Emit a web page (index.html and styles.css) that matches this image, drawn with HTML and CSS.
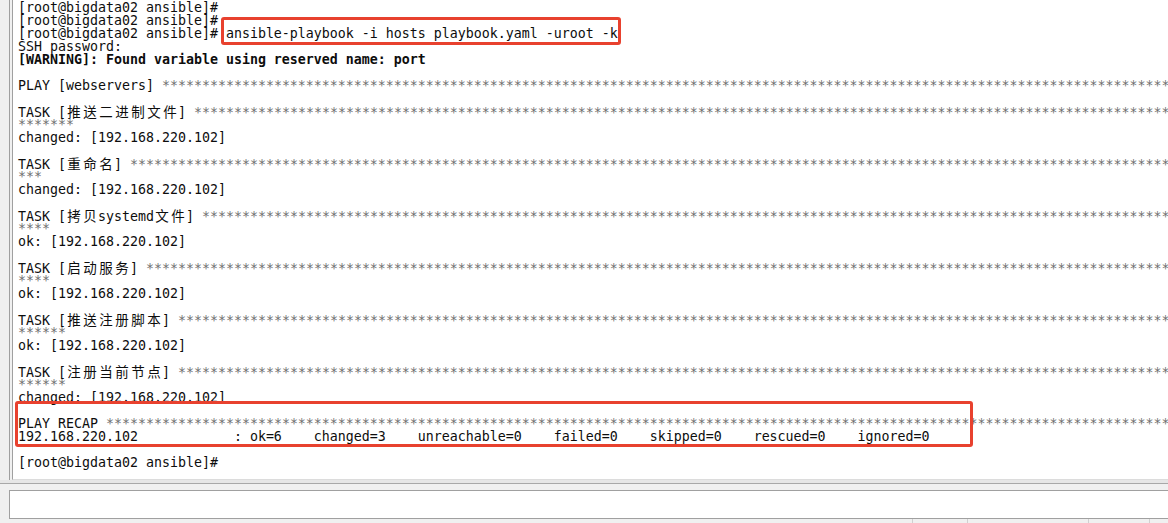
FILE: index.html
```html
<!DOCTYPE html>
<html lang="zh">
<head>
<meta charset="utf-8">
<title>ansible terminal</title>
<link rel="stylesheet" href="styles.css">
</head>
<body>
<div class="app">
  <div class="term-frame">
    <div class="screen">
      <div class="line">[root@bigdata02 ansible]#</div>
      <div class="line">[root@bigdata02 ansible]#</div>
      <div class="line">[root@bigdata02 ansible]# ansible-playbook -i hosts playbook.yaml -uroot -k</div>
      <div class="line">SSH password:</div>
      <div class="line bold">[WARNING]: Found variable using reserved name: port</div>
      <div class="line"></div>
      <div class="line">PLAY [webservers] <span class="stars">******************************************************************************************************************************************************</span></div>
      <div class="line"></div>
      <div class="line">TASK [<span class="cjk">推送二进制文件</span>] <span class="stars">******************************************************************************************************************************************************</span></div>
      <div class="line"><span class="stars">*******</span></div>
      <div class="line">changed: [192.168.220.102]</div>
      <div class="line"></div>
      <div class="line">TASK [<span class="cjk">重命名</span>] <span class="stars">******************************************************************************************************************************************************</span></div>
      <div class="line"><span class="stars">***</span></div>
      <div class="line">changed: [192.168.220.102]</div>
      <div class="line"></div>
      <div class="line">TASK [<span class="cjk">拷贝</span>systemd<span class="cjk">文件</span>] <span class="stars">******************************************************************************************************************************************************</span></div>
      <div class="line"><span class="stars">****</span></div>
      <div class="line">ok: [192.168.220.102]</div>
      <div class="line"></div>
      <div class="line">TASK [<span class="cjk">启动服务</span>] <span class="stars">******************************************************************************************************************************************************</span></div>
      <div class="line"><span class="stars">****</span></div>
      <div class="line">ok: [192.168.220.102]</div>
      <div class="line"></div>
      <div class="line">TASK [<span class="cjk">推送注册脚本</span>] <span class="stars">******************************************************************************************************************************************************</span></div>
      <div class="line"><span class="stars">******</span></div>
      <div class="line">ok: [192.168.220.102]</div>
      <div class="line"></div>
      <div class="line">TASK [<span class="cjk">注册当前节点</span>] <span class="stars">******************************************************************************************************************************************************</span></div>
      <div class="line"><span class="stars">******</span></div>
      <div class="line">changed: [192.168.220.102]</div>
      <div class="line"></div>
      <div class="line">PLAY RECAP <span class="stars">******************************************************************************************************************************************************</span></div>
      <div class="line">192.168.220.102            : ok=6    changed=3    unreachable=0    failed=0    skipped=0    rescued=0    ignored=0</div>
      <div class="line"></div>
      <div class="line">[root@bigdata02 ansible]#</div>

      <div class="mark mark-cmd"></div>
      <div class="mark mark-recap"></div>
    </div>
  </div>
  <div class="gap-bar"></div>
  <div class="input-box"></div>
  <div class="status-bar">
    <span class="status-cell grow"></span>
    <span class="status-cell w54"></span>
    <span class="status-cell w120"></span>
    <span class="status-cell w60"></span>
    <span class="status-cell w19"></span>
  </div>
</div>
</body>
</html>
```

FILE: styles.css
```css
html, body {
  margin: 0;
  padding: 0;
}

body {
  width: 1168px;
  height: 523px;
  overflow: hidden;
  background: #f0f0f0;
}

.app {
  display: flex;
  flex-direction: column;
  width: 1168px;
  height: 523px;
}

.term-frame {
  margin-left: 9px;
  border-left: 1px solid #a0a0a0;
  padding-left: 2px;
  height: 480px;
  flex: none;
  background: #f0f0f0;
}

.screen {
  position: relative;
  height: 480px;
  border-left: 1px solid #a0a0a0;
  border-bottom: 1px solid #dcdcdc;
  box-sizing: border-box;
  background: #ffffff;
  padding: 1px 0 0 5px;
  overflow: hidden;
  font-family: "DejaVu Sans Mono", "Noto Sans CJK SC", monospace;
  font-size: 13.29px;
  color: #0d0d0d;
}

.line {
  height: 13px;
  line-height: 13px;
  white-space: pre;
}

.bold {
  font-weight: bold;
}

.cjk {
  font-family: "Noto Sans CJK SC", sans-serif;
  font-size: 13.5px;
  letter-spacing: 2.5px;
  padding-left: 1.25px;
  margin-right: -1.25px;
  line-height: 13px;
}

.stars {
  color: #6f6f6f;
}

.mark {
  position: absolute;
  border: 3px solid #e8412e;
  border-radius: 3px;
  box-sizing: border-box;
}

.mark-cmd {
  left: 208px;
  top: 17px;
  width: 400px;
  height: 28px;
}

.mark-recap {
  left: 2px;
  top: 401px;
  width: 958px;
  height: 46px;
}

.gap-bar {
  height: 10px;
  flex: none;
  box-sizing: border-box;
  border-top: 3px solid #e6e6e6;
  position: relative;
  background: #f0f0f0;
  box-shadow: inset 0 1px 0 #a8a8a8;
}

.input-box {
  margin-left: 9px;
  height: 29px;
  flex: none;
  box-sizing: border-box;
  border-top: 1px solid #a0a0a0;
  border-bottom: 1px solid #a0a0a0;
  border-left: 1px solid #a0a0a0;
  background: #ffffff;
}

.status-bar {
  display: flex;
  flex: 1;
  background: #f0f0f0;
}

.status-cell {
  border-right: 1px solid #d0d0d0;
  height: 100%;
}

.grow { flex: 1; }
.w54 { width: 54px; }
.w120 { width: 120px; }
.w60 { width: 60px; }
.w19 { width: 18px; border-right: 0; }
```
